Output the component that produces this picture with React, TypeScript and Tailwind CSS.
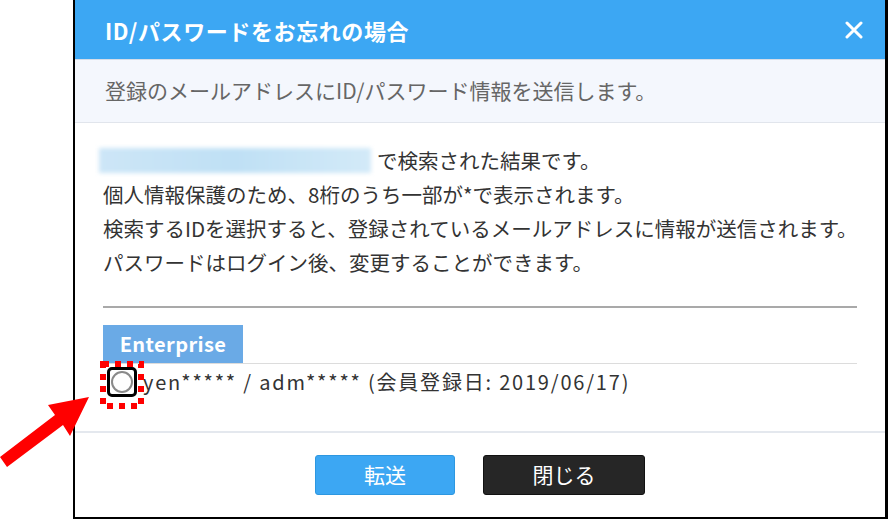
import React from 'react';

const lines = [
  '個人情報保護のため、8桁のうち一部が*で表示されます。',
  '検索するIDを選択すると、登録されているメールアドレスに情報が送信されます。',
  'パスワードはログイン後、変更することができます。',
];

const App: React.FC = () => {
  return (
    <div
      className="relative w-[888px] h-[519px] bg-white overflow-hidden"
      style={{ fontFamily: '"Noto Sans CJK JP", "Noto Sans", sans-serif' }}
    >
      <div className="ml-[73px] w-[815px] h-[519px] border-l-2 border-r-[3px] border-b-2 border-black flex flex-col bg-white">
        {/* Header */}
        <div className="h-[60px] flex-shrink-0 bg-[#3ca7f3] border-b border-[#d6dde8] flex items-center justify-between pl-[30px] pr-[20px]">
          <h2 className="text-[22px] tracking-[0.6px] font-bold text-white leading-none">ID/パスワードをお忘れの場合</h2>
          <svg width="18" height="18" viewBox="0 0 18 18" className="mr-[2px]">
            <path d="M2 2 L16 16 M16 2 L2 16" stroke="white" strokeWidth="3" strokeLinecap="round" />
          </svg>
        </div>

        {/* Sub header */}
        <div className="h-[63px] flex-shrink-0 bg-[#f4f7fd] border-b border-[#e1e5ec] flex items-center pl-[30px]">
          <p className="text-[21px] text-[#666] whitespace-nowrap">登録のメールアドレスにID/パスワード情報を送信します。</p>
        </div>

        {/* Body */}
        <div className="h-[308px] flex-shrink-0 px-7 pt-[20px] text-[#333]">
          <div className="text-[20.5px] leading-[34px] whitespace-nowrap">
            <div className="flex items-center">
              <span className="w-[272px] h-[25px] -ml-[4px] bg-gradient-to-r from-[#cde6f7] via-[#bfe0f5] to-[#d3eaf8] blur-[2px]" />
              <span className="ml-[6px]">で検索された結果です。</span>
            </div>
            {lines.map(l => (
              <div key={l}>{l}</div>
            ))}
          </div>

          <div className="mt-[27px] h-[2px] bg-[#a9a9a9]" />

          <div className="mt-[17px] border-b border-[#dcdcdc]">
            <div className="w-[140px] h-[38px] bg-[#6aaae6] flex items-center justify-center text-white font-bold text-[20px] tracking-[0.4px]">
              Enterprise
            </div>
          </div>

          <div className="h-[36px] flex items-center text-[20px] text-[#333] whitespace-nowrap">
            <span className="ml-[4px] w-[30px] h-[30px] border-[3px] border-black rounded-[5px] flex items-center justify-center">
              <span className="w-[22px] h-[22px] rounded-full border-2 border-[#8a8a8a] bg-white" />
            </span>
            <span className="ml-[6px] tracking-[1.8px]">yen***** / adm***** (会員登録日: 2019/06/17)</span>
          </div>
        </div>

        {/* Footer */}
        <div className="flex-1 border-t-2 border-[#e4e8ee] flex justify-center gap-[28px] pt-[22px]">
          <button className="w-[140px] h-[40px] rounded-[3px] bg-[#3ca7f3] border border-[#2d97e0] text-white text-[21px]">
            転送
          </button>
          <button className="w-[162px] h-[40px] rounded-[3px] bg-[#262626] border border-[#111] text-white text-[21px]">
            閉じる
          </button>
        </div>
      </div>

      {/* Annotation: dotted highlight */}
      <svg className="absolute left-[100px] top-[361px]" width="44" height="48" viewBox="0 0 44 48">
        <rect x="3" y="3" width="38" height="42" fill="none" stroke="#ff0000" strokeWidth="6" strokeDasharray="6 6" />
      </svg>

      {/* Annotation: arrow */}
      <svg className="absolute left-0 top-0" width="100" height="519" viewBox="0 0 100 519">
        <polygon points="89,397 48,405 55,415 0,457 7,467 63,425 70,436" fill="#ff0000" />
      </svg>
    </div>
  );
};

export default App;
